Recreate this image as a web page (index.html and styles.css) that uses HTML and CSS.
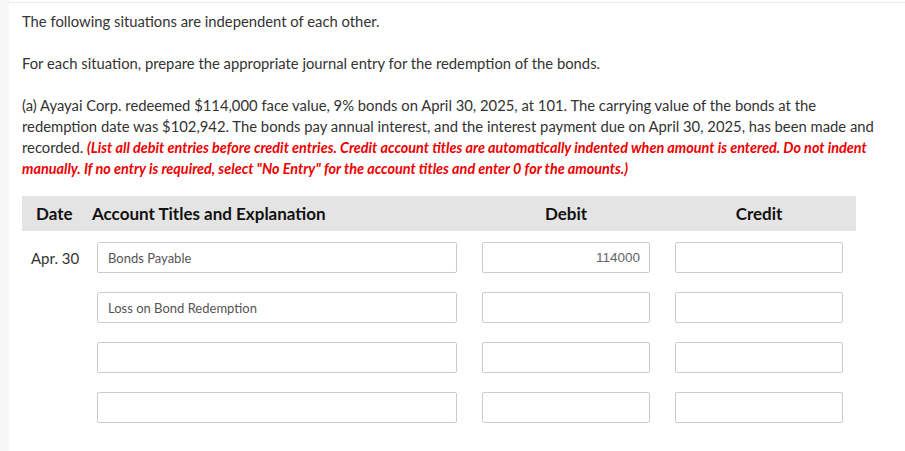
FILE: index.html
```html
<!DOCTYPE html>
<html lang="en">
<head>
<meta charset="utf-8">
<title>Bond redemption</title>
<link rel="stylesheet" href="styles.css">
</head>
<body>
<div class="strip"></div>
<main class="main">
  <p class="para">The following situations are independent of each other.</p>
  <p class="para">For each situation, prepare the appropriate journal entry for the redemption of the bonds.</p>
  <p class="para last">(a) Ayayai Corp. redeemed $114,000 face value, 9% bonds on April 30, 2025, at 101. The carrying value of the bonds at the redemption date was $102,942. The bonds pay annual interest, and the interest payment due on April 30, 2025, has been made and recorded. <em class="note">(List all debit entries before credit entries. Credit account titles are automatically indented when amount is entered. Do not indent manually. If no entry is required, select "No Entry" for the account titles and enter 0 for the amounts.)</em></p>

  <div class="journal">
    <div class="head">
      <div class="h-date">Date</div>
      <div class="h-acct">Account Titles and Explanation</div>
      <div class="h-amt h-debit">Debit</div>
      <div class="h-amt">Credit</div>
    </div>
    <div class="rows">
      <div class="date">Apr. 30</div>
      <input class="field acct" type="text" value="Bonds Payable">
      <input class="field amt" type="text" value="114000">
      <input class="field amt" type="text" value="">

      <div class="date"></div>
      <input class="field acct" type="text" value="Loss on Bond Redemption">
      <input class="field amt" type="text" value="">
      <input class="field amt" type="text" value="">

      <div class="date"></div>
      <input class="field acct" type="text" value="">
      <input class="field amt" type="text" value="">
      <input class="field amt" type="text" value="">

      <div class="date"></div>
      <input class="field acct" type="text" value="">
      <input class="field amt" type="text" value="">
      <input class="field amt" type="text" value="">
    </div>
  </div>
</main>
</body>
</html>
```

FILE: styles.css
```css
html, body {
  margin: 0;
  padding: 0;
  background: #ffffff;
}
body {
  display: flex;
  min-height: 451px;
  font-family: Lato, "Open Sans", sans-serif;
  color: #333333;
  overflow: hidden;
}
.strip {
  flex: 0 0 9px;
  background: #f7f7f7;
}
.main {
  flex: 1;
  margin-top: 2px;
  border-top: 1px solid #ebebeb;
  padding: 8px 12px 0 13px;
}
.para {
  margin: 0 0 21px 0;
  font-size: 14.8px;
  line-height: 21px;
}
.para.last {
  margin-bottom: 17px;
}
.note {
  color: #ee0000;
  font-weight: bold;
  font-style: italic;
  font-size: 14.4px;
}
.journal {
  width: 834px;
}
.head {
  display: flex;
  align-items: center;
  height: 35px;
  background: #e4e4e4;
  padding-left: 14px;
  font-weight: bold;
  font-size: 17px;
  color: #111111;
}
.h-date { width: 56px; }
.h-acct { width: 390px; }
.h-amt { width: 168px; text-align: center; }
.h-debit { margin-right: 25px; }
.rows {
  display: grid;
  grid-template-columns: 41px 360px 168px 168px;
  column-gap: 25px;
  row-gap: 19px;
  padding: 11px 0 0 9px;
  align-items: center;
}
.date {
  font-size: 15px;
  white-space: nowrap;
  color: #333333;
}
.field {
  box-sizing: border-box;
  height: 31px;
  margin: 0;
  border: 1px solid #cccccc;
  border-radius: 2px;
  background: #ffffff;
  outline: none;
}
.acct {
  font-family: Lato, "Open Sans", sans-serif;
  font-size: 13px;
  color: #555555;
  padding: 0 10px;
}
.amt {
  font-family: "Liberation Sans", Arial, sans-serif;
  font-size: 13.5px;
  color: #666666;
  text-align: right;
  padding: 0 9px;
}
```
